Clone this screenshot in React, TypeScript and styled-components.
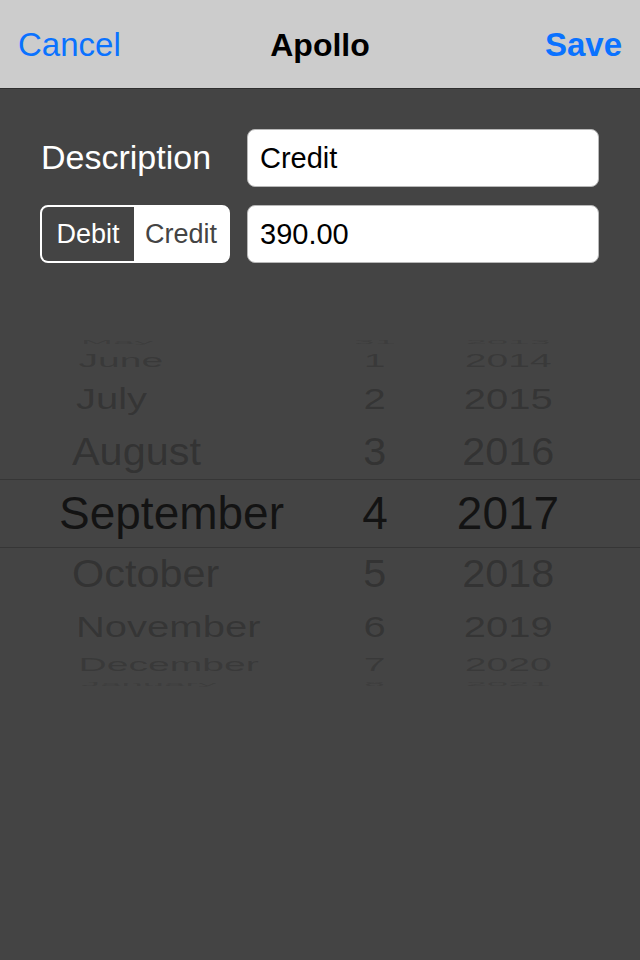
import styled, { createGlobalStyle } from 'styled-components';

const R = 175;
const STEP = 20.7;
const rad = (d: number) => (d * Math.PI) / 180;

const MONTHS = ['May', 'June', 'July', 'August', 'September', 'October', 'November', 'December', 'January'];
const DAYS = ['31', '1', '2', '3', '4', '5', '6', '7', '8'];
const YEARS = ['2013', '2014', '2015', '2016', '2017', '2018', '2019', '2020', '2021'];

// horizontal shrink per distance from the selected row
const SHRINK = [1, 0.9, 0.87, 0.85, 0.83];
// text darkness per distance
const INK = [0.72, 0.27, 0.23, 0.17, 0.11];

const GlobalStyle = createGlobalStyle`
	html, body {
		margin: 0;
		padding: 0;
		background: #444444;
	}

	body {
		font-family: "Liberation Sans", Arial, sans-serif;
	}
`;

export default function App() {
	const rows = MONTHS.map((month, index) => {
		const offset = index - 4;
		const angle = offset * STEP;
		const top = Math.min(90, angle + STEP / 2);
		const bottom = Math.max(-90, angle - STEP / 2);
		const height = R * (Math.sin(rad(top)) - Math.sin(rad(bottom)));
		const sx = SHRINK[Math.abs(offset)];
		const sy = Math.cos(rad(angle)) * sx;

		return {
			month,
			day: DAYS[index],
			year: YEARS[index],
			height,
			sx,
			sy,
			ink: INK[Math.abs(offset)]
		};
	});

	return (
		<Screen>
			<GlobalStyle/>

			<NavBar>
				<NavButton>Cancel</NavButton>
				<NavTitle>Apollo</NavTitle>
				<NavButton $bold={true}>Save</NavButton>
			</NavBar>

			<Form>
				<Label>Description</Label>
				<Field>Credit</Field>

				<Segmented>
					<Segment $active={true}>Debit</Segment>
					<Segment>Credit</Segment>
				</Segmented>
				<Field>390.00</Field>
			</Form>

			<Wheel>
				{rows.map((row) => (
					<WheelRow key={row.month} $height={row.height}>
						<MonthCell $sx={row.sx} $sy={row.sy} $ink={row.ink}>{row.month}</MonthCell>
						<DayCell $sx={row.sx} $sy={row.sy} $ink={row.ink}>{row.day}</DayCell>
						<YearCell $sx={row.sx} $sy={row.sy} $ink={row.ink}>{row.year}</YearCell>
					</WheelRow>
				))}
			</Wheel>
		</Screen>
	);
}

const Screen = styled.div`
    min-height: 960px;
    background: #444444;
    display: flex;
    flex-direction: column;
`;

const NavBar = styled.div`
    height: 88px;
    padding: 0 18px;
    display: grid;
    grid-template-columns: 1fr auto 1fr;
    align-items: center;
    background: #cccccc;
    border-bottom: 1px solid #2e2e2e;
`;

const NavButton = styled.span<{ $bold?: boolean }>`
    font-size: 33px;
    font-weight: ${p => (p.$bold ? 700 : 400)};
    color: #0a72ff;
    padding-top: 2px;

    &:last-child {
        justify-self: end;
    }
`;

const NavTitle = styled.span`
    font-size: 32px;
    font-weight: 700;
    color: #000000;
    padding-top: 2px;
`;

const Form = styled.div`
    display: grid;
    grid-template-columns: 190px 1fr;
    column-gap: 17px;
    row-gap: 18px;
    padding: 40px 41px 0 40px;
`;

const Label = styled.div`
    display: flex;
    align-items: center;
    padding-left: 1px;
    padding-bottom: 2px;
    font-size: 34px;
    color: #ffffff;
`;

const Field = styled.div`
    height: 56px;
    display: flex;
    align-items: center;
    padding: 0 12px;
    background: #ffffff;
    border: 1px solid #b8b8b8;
    border-radius: 8px;
    font-size: 29px;
    color: #000000;
`;

const Segmented = styled.div`
    height: 54px;
    display: grid;
    grid-template-columns: 92px 1fr;
    border: 2px solid #ffffff;
    border-radius: 8px;
    overflow: hidden;
    background: #ffffff;
`;

const Segment = styled.div<{ $active?: boolean }>`
    display: flex;
    align-items: center;
    justify-content: center;
    font-size: 27px;
    background: ${p => (p.$active ? '#444444' : '#ffffff')};
    color: ${p => (p.$active ? '#ffffff' : '#444444')};
`;

const Wheel = styled.div`
    position: relative;
    margin-top: 75px;
    height: 350px;
    display: flex;
    flex-direction: column;
    justify-content: center;
    overflow: hidden;

    &::after {
        content: '';
        position: absolute;
        left: 0;
        right: 0;
        top: calc(50% - 34px);
        height: 67px;
        border-top: 1px solid #363636;
        border-bottom: 1px solid #363636;
        pointer-events: none;
    }
`;

const WheelRow = styled.div.attrs<{ $height: number }>(p => ({
	style: { height: `${p.$height}px` }
}))<{ $height: number }>`
    flex: none;
    display: grid;
    grid-template-columns: 298px 70px 204px;
    grid-template-rows: minmax(0, 1fr);
    padding-left: 40px;
    align-items: center;
`;

type CellProps = { $sx: number; $sy: number; $ink: number };

const Cell = styled.div.attrs<CellProps>(p => ({
	style: {
		transform: `scale(${p.$sx}, ${p.$sy})`,
		color: `rgba(0, 0, 0, ${p.$ink})`
	}
}))<CellProps>`
    height: 46px;
    line-height: 46px;
    font-size: 46px;
    white-space: nowrap;
    transform-origin: center center;
`;

const MonthCell = styled(Cell)`
    padding-left: 19px;
    text-align: left;
`;

const DayCell = styled(Cell)`
    text-align: center;
    padding-left: 4px;
`;

const YearCell = styled(Cell)`
    text-align: center;
    padding-right: 4px;
`;
